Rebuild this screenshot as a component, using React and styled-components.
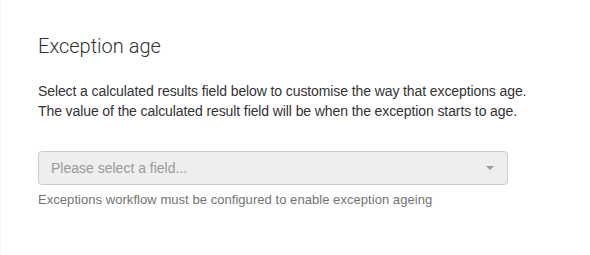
import styled, { createGlobalStyle } from "styled-components";

const GlobalStyle = createGlobalStyle`
    body {
        margin: 0;
        background: #fff;
        font-family: "Liberation Sans", Arial, sans-serif;
        color: #333;
    }
`;

const Panel = styled.section`
    box-sizing: border-box;
    width: 590px;
    height: 255px;
    padding: 31px 37px 0;
    border-left: 1px solid #f5f5f5;
`;

const Title = styled.h3`
    margin: 0 0 20px;
    font-family: "Roboto", "Liberation Sans", sans-serif;
    font-weight: 300;
    font-size: 20px;
    line-height: 30px;
    color: #333;
`;

const Description = styled.p`
    margin: 0 0 30px;
    font-size: 14px;
    line-height: 20px;
    letter-spacing: -0.1px;
    color: #333;
`;

const SelectWrap = styled.div`
    position: relative;
    width: 470px;
`;

const Select = styled.div`
    box-sizing: border-box;
    height: 34px;
    display: flex;
    align-items: center;
    padding: 0 12px;
    background: #eee;
    border: 1px solid #ccc;
    border-radius: 4px;
    font-size: 14px;
    color: #999;
`;

const Caret = styled.span`
    position: absolute;
    right: 14px;
    top: 15px;
    width: 0;
    height: 0;
    border-left: 4px solid transparent;
    border-right: 4px solid transparent;
    border-top: 4px solid #999;
`;

const HelpText = styled.p`
    margin: 6px 0 0;
    font-size: 13px;
    line-height: 18px;
    letter-spacing: 0.05px;
    color: #737373;
`;

export default function App() {
    return (
        <>
            <GlobalStyle />
            <Panel>
                <Title>Exception age</Title>
                <Description>
                    Select a calculated results field below to customise the way that exceptions age.
                    <br />
                    The value of the calculated result field will be when the exception starts to age.
                </Description>
                <SelectWrap>
                    <Select>Please select a field...</Select>
                    <Caret />
                </SelectWrap>
                <HelpText>Exceptions workflow must be configured to enable exception ageing</HelpText>
            </Panel>
        </>
    );
}
